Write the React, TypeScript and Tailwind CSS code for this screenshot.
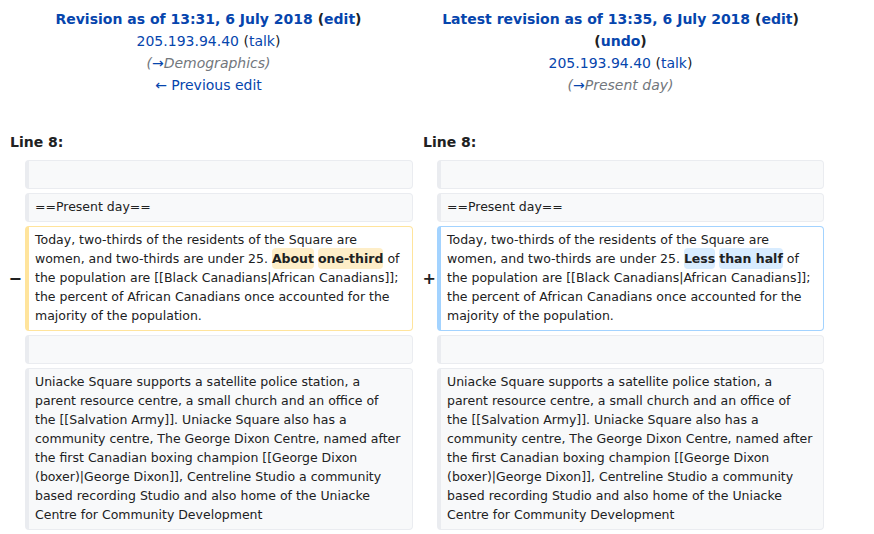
import React from 'react';

const link = 'text-[#0645ad]';

function Marker({ sign, className }: { sign: string; className: string }) {
  return (
    <div className={`flex shrink-0 items-center justify-end text-[16px] font-bold text-[#202122] ${className}`}>
      {sign}
    </div>
  );
}

function Box({
  kind,
  width,
  children,
}: {
  kind: 'context' | 'deleted' | 'added';
  width: string;
  children?: React.ReactNode;
}) {
  const tone =
    kind === 'deleted'
      ? 'border-[#ffe49c] bg-white'
      : kind === 'added'
        ? 'border-[#a3d3ff] bg-white'
        : 'border-[#eaecf0] bg-[#f8f9fa]';
  return (
    <div
      className={`shrink-0 rounded-[4px] border border-l-4 pb-[5px] pl-[6px] pr-[10px] pt-[3px] text-[12.5px] leading-[19px] text-[#202122] ${tone} ${width}`}
    >
      {children ?? <span>&nbsp;</span>}
    </div>
  );
}

function Del({ children }: { children: React.ReactNode }) {
  return <span className="rounded-[4px] bg-[#feeec8] py-[3px] font-bold">{children}</span>;
}

function Ins({ children }: { children: React.ReactNode }) {
  return <span className="rounded-[4px] bg-[#d8ecff] py-[3px] font-bold">{children}</span>;
}

const uniacke =
  'Uniacke Square supports a satellite police station, a parent resource centre, a small church and an office of the [[Salvation Army]]. Uniacke Square also has a community centre, The George Dixon Centre, named after the first Canadian boxing champion [[George Dixon (boxer)|George Dixon]], Centreline Studio a community based recording Studio and also home of the Uniacke Centre for Community Development';

export default function App() {
  return (
    <div className="h-[534px] w-[874px] overflow-hidden bg-white font-['DejaVu_Sans',sans-serif] text-[#202122]">
      {/* Revision headers */}
      <div className="flex gap-[4px] pl-[4px] pt-[8px] text-center text-[14px] leading-[22px]">
        <div className="w-[409px]">
          <div className="font-bold">
            <span className={link}>Revision as of 13:31, 6 July 2018</span> (<span className={link}>edit</span>)
          </div>
          <div>
            <span className={link}>205.193.94.40</span> (<span className={link}>talk</span>)
          </div>
          <div className="italic text-[#72777d]">
            (<span className={link}>→</span>Demographics)
          </div>
          <div className={link}>← Previous edit</div>
        </div>
        <div className="w-[407px]">
          <div className="font-bold">
            <span className={link}>Latest revision as of 13:35, 6 July 2018</span> (<span className={link}>edit</span>)
          </div>
          <div className="font-bold">
            (<span className={link}>undo</span>)
          </div>
          <div>
            <span className={link}>205.193.94.40</span> (<span className={link}>talk</span>)
          </div>
          <div className="italic text-[#72777d]">
            (<span className={link}>→</span>Present day)
          </div>
        </div>
      </div>

      {/* Line numbers */}
      <div className="mt-[35px] flex gap-[4px] pl-[4px] text-[14px] font-bold leading-[22px]">
        <div className="w-[409px] pl-[6px]">Line 8:</div>
        <div className="w-[407px] pl-[6px]">Line 8:</div>
      </div>

      {/* Diff rows */}
      <div className="mt-[7px] flex flex-col gap-[4px]">
        <div className="flex">
          <div className="w-[25px] shrink-0" />
          <Box kind="context" width="w-[388px]" />
          <div className="w-[24px] shrink-0" />
          <Box kind="context" width="w-[387px]" />
        </div>
        <div className="flex">
          <div className="w-[25px] shrink-0" />
          <Box kind="context" width="w-[388px]">==Present day==</Box>
          <div className="w-[24px] shrink-0" />
          <Box kind="context" width="w-[387px]">==Present day==</Box>
        </div>
        <div className="flex">
          <Marker sign="−" className="w-[25px] pr-[3px]" />
          <Box kind="deleted" width="w-[388px]">
            Today, two-thirds of the residents of the Square are women, and two-thirds are under 25.{' '}
            <Del>About</Del> <Del>one-third</Del> of the population are [[Black Canadians|African Canadians]];
            the percent of African Canadians once accounted for the majority of the population.
          </Box>
          <Marker sign="+" className="w-[24px] pr-[1px]" />
          <Box kind="added" width="w-[387px]">
            Today, two-thirds of the residents of the Square are women, and two-thirds are under 25.{' '}
            <Ins>Less</Ins> <Ins>than half</Ins> of the population are [[Black Canadians|African Canadians]];
            the percent of African Canadians once accounted for the majority of the population.
          </Box>
        </div>
        <div className="flex">
          <div className="w-[25px] shrink-0" />
          <Box kind="context" width="w-[388px]" />
          <div className="w-[24px] shrink-0" />
          <Box kind="context" width="w-[387px]" />
        </div>
        <div className="flex">
          <div className="w-[25px] shrink-0" />
          <Box kind="context" width="w-[388px]">{uniacke}</Box>
          <div className="w-[24px] shrink-0" />
          <Box kind="context" width="w-[387px]">{uniacke}</Box>
        </div>
      </div>
    </div>
  );
}
